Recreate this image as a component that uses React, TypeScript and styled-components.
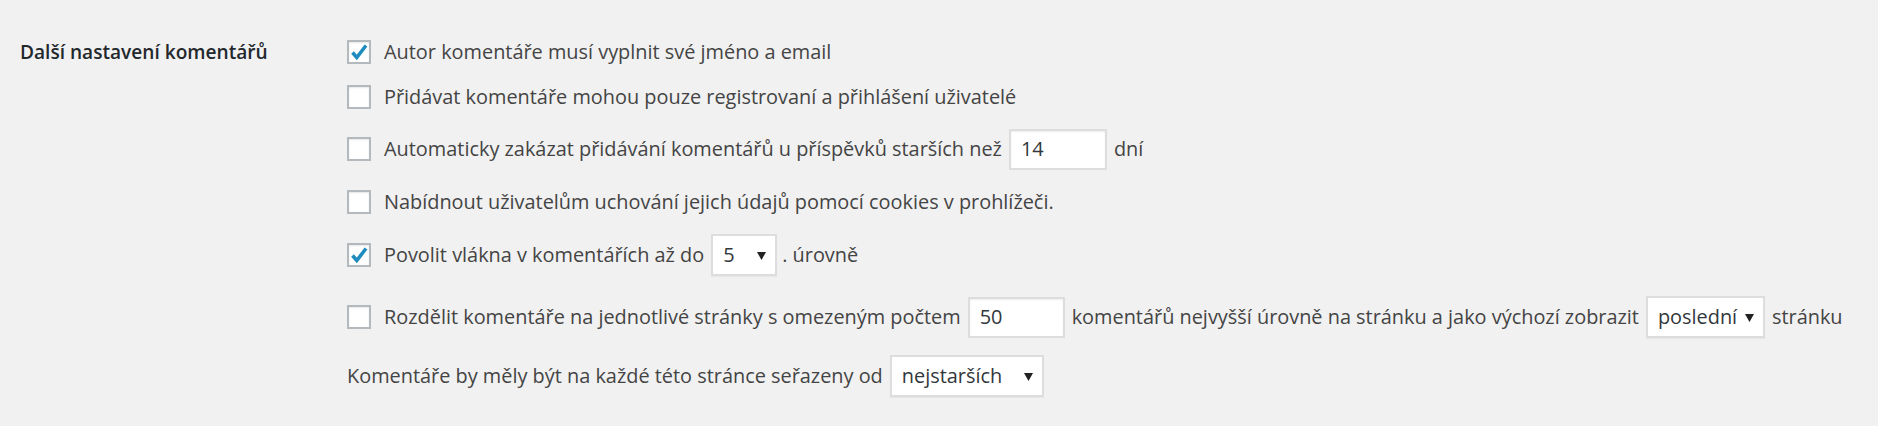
import styled, { createGlobalStyle } from 'styled-components'

const GlobalStyle = createGlobalStyle`
  html, body {
    margin: 0;
    padding: 0;
    background: #f1f1f1;
  }
  body {
    font-family: 'Open Sans', 'Noto Sans', 'Liberation Sans', sans-serif;
    color: #444;
  }
`

const FormTable = styled.div`
  display: grid;
  grid-template-columns: 327px 1fr;
  padding: 40px 0 0 20px;
  min-height: 426px;
  box-sizing: border-box;
`

const RowTitle = styled.div`
  font-size: 19.1px;
  font-weight: 600;
  color: #23282d;
  line-height: 24px;
`

const Options = styled.div`
  display: flex;
  flex-direction: column;
  gap: 20px;
`

const Option = styled.div<{ $tall?: boolean; $shift?: number }>`
  display: flex;
  align-items: center;
  gap: 7px;
  height: ${(p) => (p.$tall ? '42px' : '24px')};
  margin-top: ${(p) => p.$shift || 0}px;
  font-size: 19.9px;
  line-height: 24px;
  white-space: nowrap;
`

const Box = styled.span`
  width: 24px;
  height: 24px;
  box-sizing: border-box;
  border: 2px solid #b4b9be;
  background: #fff;
  box-shadow: inset 0 1px 2px rgba(0, 0, 0, 0.1);
  margin-right: 6px;
  flex: none;
  display: flex;
  align-items: center;
  justify-content: center;
  svg {
    display: block;
  }
`

const TextInput = styled.span<{ $w: number }>`
  width: ${(p) => p.$w}px;
  height: 41px;
  box-sizing: border-box;
  border: 2px solid #ddd;
  background: #fff;
  box-shadow: inset 0 1px 2px rgba(0, 0, 0, 0.07);
  padding: 0 10px;
  display: flex;
  align-items: center;
  color: #32373c;
  flex: none;
`

const Select = styled.span<{ $w: number }>`
  width: ${(p) => p.$w}px;
  height: 42px;
  box-sizing: border-box;
  border: 2px solid #ddd;
  background: #fff;
  box-shadow: 0 1px 1px rgba(0, 0, 0, 0.04);
  padding: 0 9px 0 10px;
  display: flex;
  align-items: center;
  justify-content: space-between;
  color: #32373c;
  flex: none;
`

const Trailing = styled.span<{ $pull?: number }>`
  margin-left: ${(p) => p.$pull || 0}px;
`

const Arrow = () => (
  <svg width="9" height="9" viewBox="0 0 9 9">
    <polygon points="0,1 9,1 4.5,9" fill="#222" />
  </svg>
)

const Checkbox = ({ checked }: { checked?: boolean }) => (
  <Box>
    {checked && (
      <svg width="20" height="20" viewBox="0 0 20 20">
        <path d="M3.5 10.5 L7.8 15.5 L17 3.5" fill="none" stroke="#1e8cbe" strokeWidth="3.6" strokeLinejoin="miter" />
      </svg>
    )}
  </Box>
)

export default function App() {
  return (
    <>
      <GlobalStyle />
      <FormTable>
        <RowTitle>Další nastavení komentářů</RowTitle>
        <Options>
          <Option>
            <Checkbox checked />
            <span>Autor komentáře musí vyplnit své jméno a email</span>
          </Option>
          <Option $shift={1}>
            <Checkbox />
            <span>Přidávat komentáře mohou pouze registrovaní a přihlášení uživatelé</span>
          </Option>
          <Option $tall $shift={-1}>
            <Checkbox />
            <span>Automaticky zakázat přidávání komentářů u příspěvků starších než</span>
            <TextInput $w={98}>14</TextInput>
            <span>dní</span>
          </Option>
          <Option>
            <Checkbox />
            <span>Nabídnout uživatelům uchování jejich údajů pomocí cookies v prohlížeči.</span>
          </Option>
          <Option $tall>
            <Checkbox checked />
            <span>Povolit vlákna v komentářích až do</span>
            <Select $w={66}>
              5 <Arrow />
            </Select>
            <Trailing $pull={-2}>. úrovně</Trailing>
          </Option>
          <Option $tall>
            <Checkbox />
            <span>Rozdělit komentáře na jednotlivé stránky s omezeným počtem</span>
            <TextInput $w={97}>50</TextInput>
            <span>komentářů nejvyšší úrovně na stránku a jako výchozí zobrazit</span>
            <Select $w={119}>
              poslední <Arrow />
            </Select>
            <span>stránku</span>
          </Option>
          <Option $tall $shift={-3}>
            <span>Komentáře by měly být na každé této stránce seřazeny od</span>
            <Select $w={154}>
              nejstarších <Arrow />
            </Select>
          </Option>
        </Options>
      </FormTable>
    </>
  )
}
